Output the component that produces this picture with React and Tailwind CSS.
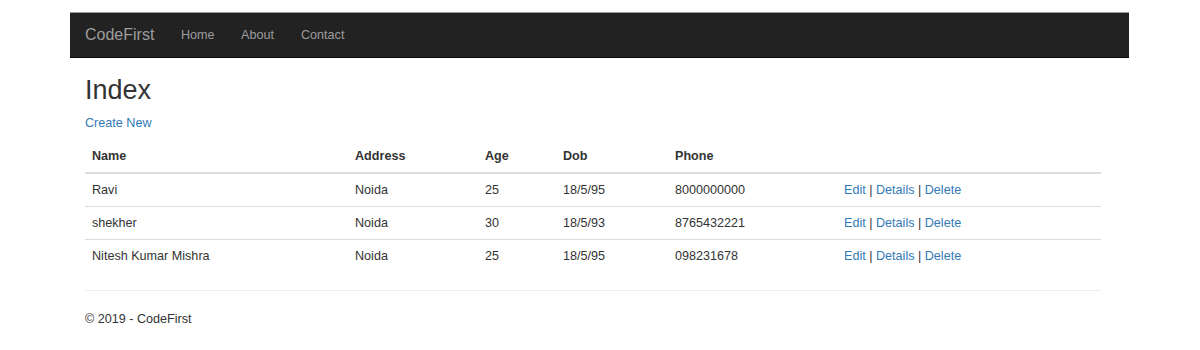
const students = [
  { name: "Ravi", address: "Noida", age: 25, dob: "18/5/95", phone: "8000000000" },
  { name: "shekher", address: "Noida", age: 30, dob: "18/5/93", phone: "8765432221" },
  { name: "Nitesh Kumar Mishra", address: "Noida", age: 25, dob: "18/5/95", phone: "098231678" },
];

const cols = "grid grid-cols-[263px_130px_78px_112px_169px_264px]";

export default function App() {
  return (
    <div className="w-[1200px] h-[350px] bg-white text-[#333] text-[12.6px]" style={{ fontFamily: '"Liberation Sans", Arial, sans-serif' }}>
      <div className="pt-[12px]">
        {/* navbar */}
        <div className="ml-[70px] w-[1059px] h-[46px] bg-[#222] border-t border-t-[#9a9a9a] border-b border-b-[#080808] flex items-center pl-[15px] text-[#9d9d9d]">
          <div className="w-[96px] text-[16px]">CodeFirst</div>
          <div className="w-[60px]">Home</div>
          <div className="w-[60px]">About</div>
          <div>Contact</div>
        </div>

        <div className="ml-[85px] w-[1016px]">
          <h2 className="mt-[17px] text-[27px] leading-[30px]">Index</h2>
          <a href="#" className="block mt-[9px] leading-[18px] text-[#337ab7]">Create New</a>

          <div className="mt-[8px]">
            <div className={`${cols} border-b-2 border-[#ddd] font-bold`}>
              {["Name", "Address", "Age", "Dob", "Phone", ""].map((h, i) => (
                <div key={i} className="px-[7px] py-[7px] leading-[18px]">{h}</div>
              ))}
            </div>
            {students.map((s, i) => (
              <div key={i} className={`${cols} ${i < students.length - 1 ? "border-b border-[#ddd]" : ""}`}>
                <div className="px-[7px] py-[7px] leading-[18px]">{s.name}</div>
                <div className="px-[7px] py-[7px] leading-[18px]">{s.address}</div>
                <div className="px-[7px] py-[7px] leading-[18px]">{s.age}</div>
                <div className="px-[7px] py-[7px] leading-[18px]">{s.dob}</div>
                <div className="px-[7px] py-[7px] leading-[18px]">{s.phone}</div>
                <div className="px-[7px] py-[7px] leading-[18px]">
                  <a href="#" className="text-[#337ab7]">Edit</a> |{" "}
                  <a href="#" className="text-[#337ab7]">Details</a> |{" "}
                  <a href="#" className="text-[#337ab7]">Delete</a>
                </div>
              </div>
            ))}
          </div>

          <hr className="mt-[18px] border-t border-[#eee]" />
          <footer className="mt-[19px] leading-[18px]">© 2019 - CodeFirst</footer>
        </div>
      </div>
    </div>
  );
}
